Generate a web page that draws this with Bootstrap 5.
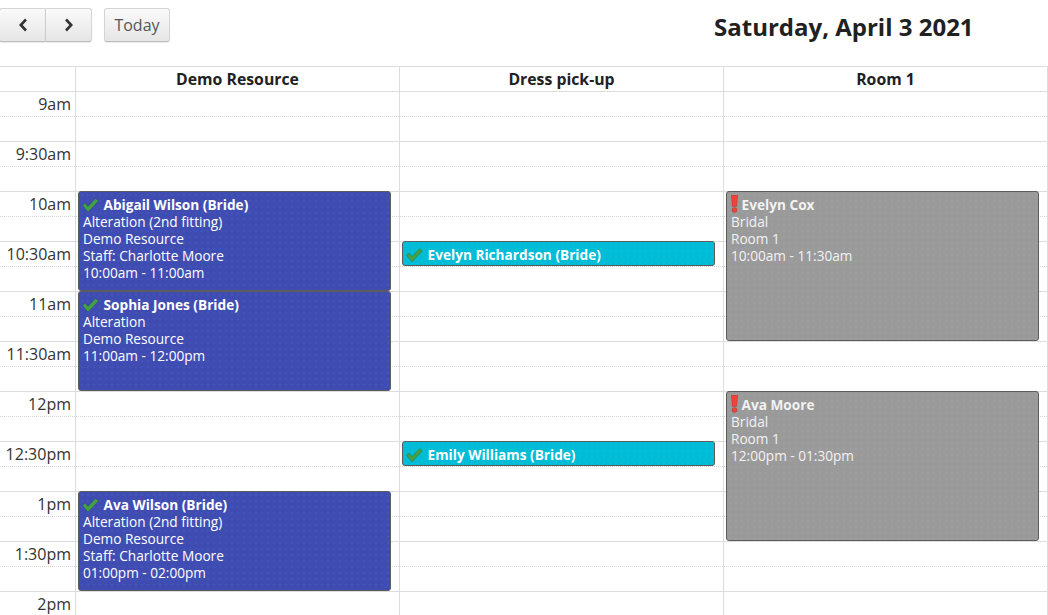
<!DOCTYPE html>
<html lang="en">

<head>
    <meta charset="UTF-8">
    <meta name="viewport" content="width=device-width, initial-scale=1.0">
    <title>Calendar</title>
    <link href="https://cdn.jsdelivr.net/npm/bootstrap@5.3.3/dist/css/bootstrap.min.css" rel="stylesheet">
    <style>
        html, body {
            height: 615px;
            overflow: hidden;
        }

        body {
            font-family: "Open Sans", "Liberation Sans", sans-serif;
            color: #212121;
        }

        .cal-toolbar {
            height: 66px;
            padding-top: 8px;
        }

        .cal-btn {
            height: 34px;
            padding: 0;
            font-size: 16px;
            color: #555;
            border: 1px solid #d4d4d4;
            border-bottom-color: #bbb;
            border-radius: 3px;
            background: linear-gradient(#fafafa, #e6e6e6);
            box-shadow: 0 1px 1px rgba(0, 0, 0, .08);
        }

        .cal-nav-prev {
            width: 46px;
            margin-left: -1px;
            border-radius: 3px 0 0 3px;
            border-right-width: 0;
        }

        .cal-nav-next {
            width: 47px;
            border-left: 1px solid #ccc;
            border-radius: 0 3px 3px 0;
        }

        .cal-today {
            width: 66px;
            margin-left: 12px;
        }

        .cal-title {
            width: 334px;
            margin-top: 2px;
            font-size: 24px;
            line-height: 34px;
            font-weight: 700;
        }

        .cal-grid {
            height: 549px;
            overflow: hidden;
            border-top: 1px solid #ddd;
            border-right: 1px solid #ddd;
        }

        .cal-head {
            height: 25px;
            border-bottom: 1px solid #ddd;
        }

        .cal-axis {
            width: 76px;
            flex: none;
            border-right: 1px solid #ddd;
        }

        .cal-col {
            width: 324px;
            flex: none;
            border-right: 1px solid #ddd;
        }

        .cal-col:last-child {
            flex: 1 1 0;
            width: auto;
            border-right: 0;
        }

        .cal-col-title {
            font-size: 15.8px;
            line-height: 24px;
            font-weight: 700;
            text-align: center;
        }

        .cal-slot {
            height: 25px;
            border-bottom: 1px dotted #d6d6d6;
        }

        .cal-slot:nth-child(even) {
            border-bottom: 1px solid #ddd;
        }

        .cal-time {
            padding: 1px 4px 0 0;
            font-size: 16px;
            line-height: 22px;
            color: #333;
            text-align: right;
        }

        .cal-event {
            position: absolute;
            left: 2px;
            width: 313px;
            padding: 4px;
            overflow: hidden;
            font-size: 13.65px;
            line-height: 17px;
            color: #fff;
            border: 1px solid #5c5c5c;
            border-radius: 3px;
            background-image: radial-gradient(rgba(255, 255, 255, .035) 1px, transparent 1px);
            background-size: 6px 6px;
        }

        .cal-event b {
            font-weight: 700;
        }

        .cal-event svg {
            margin: -4px 0;
            vertical-align: 1px;
        }

        .cal-event .ic-check {
            margin-left: -1px;
            margin-right: 1px;
        }

        .ev-blue {
            background-color: #3f4db3;
        }

        .ev-cyan {
            background-color: #00bcd6;
        }

        .ev-gray {
            color: #f2f2f2;
            background-color: #9a9a9a;
        }
    </style>
</head>

<body>
    <div class="cal-toolbar d-flex align-items-start">
        <div class="d-flex">
            <button class="btn cal-btn cal-nav-prev d-flex align-items-center justify-content-center" type="button" aria-label="Previous">
                <svg width="12" height="14" viewBox="0 0 12 14"><path d="M9 1.500 3.800 7 9 12.500" fill="none" stroke="#333" stroke-width="2.600"/></svg>
            </button>
            <button class="btn cal-btn cal-nav-next d-flex align-items-center justify-content-center" type="button" aria-label="Next">
                <svg width="12" height="14" viewBox="0 0 12 14"><path d="M3 1.500 8.200 7 3 12.500" fill="none" stroke="#333" stroke-width="2.600"/></svg>
            </button>
        </div>
        <button class="btn cal-btn cal-today" type="button">Today</button>
        <div class="cal-title ms-auto">Saturday, April 3 2021</div>
    </div>

    <div class="cal-grid">
        <div class="cal-head d-flex">
            <div class="cal-axis"></div>
            <div class="cal-col cal-col-title">Demo Resource</div>
            <div class="cal-col cal-col-title">Dress pick-up</div>
            <div class="cal-col cal-col-title">Room 1</div>
        </div>
        <div class="position-relative">
            <div id="rows"></div>
            <div class="d-flex position-absolute top-0 start-0 w-100">
                <div class="cal-axis" id="axis"></div>
                <div class="cal-col position-relative" data-col="0"></div>
                <div class="cal-col position-relative" data-col="1"></div>
                <div class="cal-col position-relative" data-col="2"></div>
            </div>
        </div>
    </div>

    <script>
        const slotHeight = 25;
        const times = ['9am', '9:30am', '10am', '10:30am', '11am', '11:30am', '12pm', '12:30pm', '1pm', '1:30pm', '2pm'];
        const check = '<svg class="ic-check" width="17" height="15" viewBox="0 0 17 15"><path d="M.5 7.500 3 5l3 3.500L13.500.5 16.500 3 6 14z" fill="#43a047" stroke="rgba(0,0,0,.25)" stroke-width=".6"/></svg>';
        const alert = '<svg width="7" height="18" viewBox="0 0 7 18"><path d="M.3 0h6.400L5.700 11.500H1.300z" fill="#f44336" stroke="rgba(0,0,0,.25)" stroke-width=".6"/><circle cx="3.500" cy="15" r="2.500" fill="#f44336" stroke="rgba(0,0,0,.25)" stroke-width=".6"/></svg>';

        // slot = half hours from 9am, span = number of half hours
        const events = [
            { col: 0, slot: 2, span: 2, cls: 'ev-blue', icon: check, name: 'Abigail Wilson (Bride)', lines: ['Alteration (2nd fitting)', 'Demo Resource', 'Staff: Charlotte Moore', '10:00am - 11:00am'] },
            { col: 0, slot: 4, span: 2, cls: 'ev-blue', icon: check, name: 'Sophia Jones (Bride)', lines: ['Alteration', 'Demo Resource', '11:00am - 12:00pm'] },
            { col: 0, slot: 8, span: 2, cls: 'ev-blue', icon: check, name: 'Ava Wilson (Bride)', lines: ['Alteration (2nd fitting)', 'Demo Resource', 'Staff: Charlotte Moore', '01:00pm - 02:00pm'] },
            { col: 1, slot: 3, span: 0.5, cls: 'ev-cyan', icon: check, name: 'Evelyn Richardson (Bride)', lines: [] },
            { col: 1, slot: 7, span: 0.5, cls: 'ev-cyan', icon: check, name: 'Emily Williams (Bride)', lines: [] },
            { col: 2, slot: 2, span: 3, cls: 'ev-gray', icon: alert, name: 'Evelyn Cox', lines: ['Bridal', 'Room 1', '10:00am - 11:30am'] },
            { col: 2, slot: 6, span: 3, cls: 'ev-gray', icon: alert, name: 'Ava Moore', lines: ['Bridal', 'Room 1', '12:00pm - 01:30pm'] }
        ];

        // rows run the full width of the grid, under the axis and the columns
        document.getElementById('rows').innerHTML = times.map(() => '<div class="cal-slot"></div><div class="cal-slot"></div>').join('');
        document.getElementById('axis').innerHTML = times.map(t => `<div class="cal-time" style="height: ${slotHeight * 2}px">${t}</div>`).join('');

        const cols = document.querySelectorAll('[data-col]');
        cols.forEach(col => {
            col.style.height = `${times.length * slotHeight * 2}px`;
        });

        events.forEach(ev => {
            const el = document.createElement('div');
            el.className = `cal-event ${ev.cls}`;
            el.style.top = `${ev.slot * slotHeight * 2 - 1}px`;
            el.style.height = `${ev.span * slotHeight * 2}px`;
            el.innerHTML = `${ev.icon} <b>${ev.name}</b>` + ev.lines.map(l => `<div>${l}</div>`).join('');
            cols[ev.col].appendChild(el);
        });
    </script>

    <script src="https://cdn.jsdelivr.net/npm/bootstrap@5.3.3/dist/js/bootstrap.bundle.min.js"></script>
</body>

</html>
